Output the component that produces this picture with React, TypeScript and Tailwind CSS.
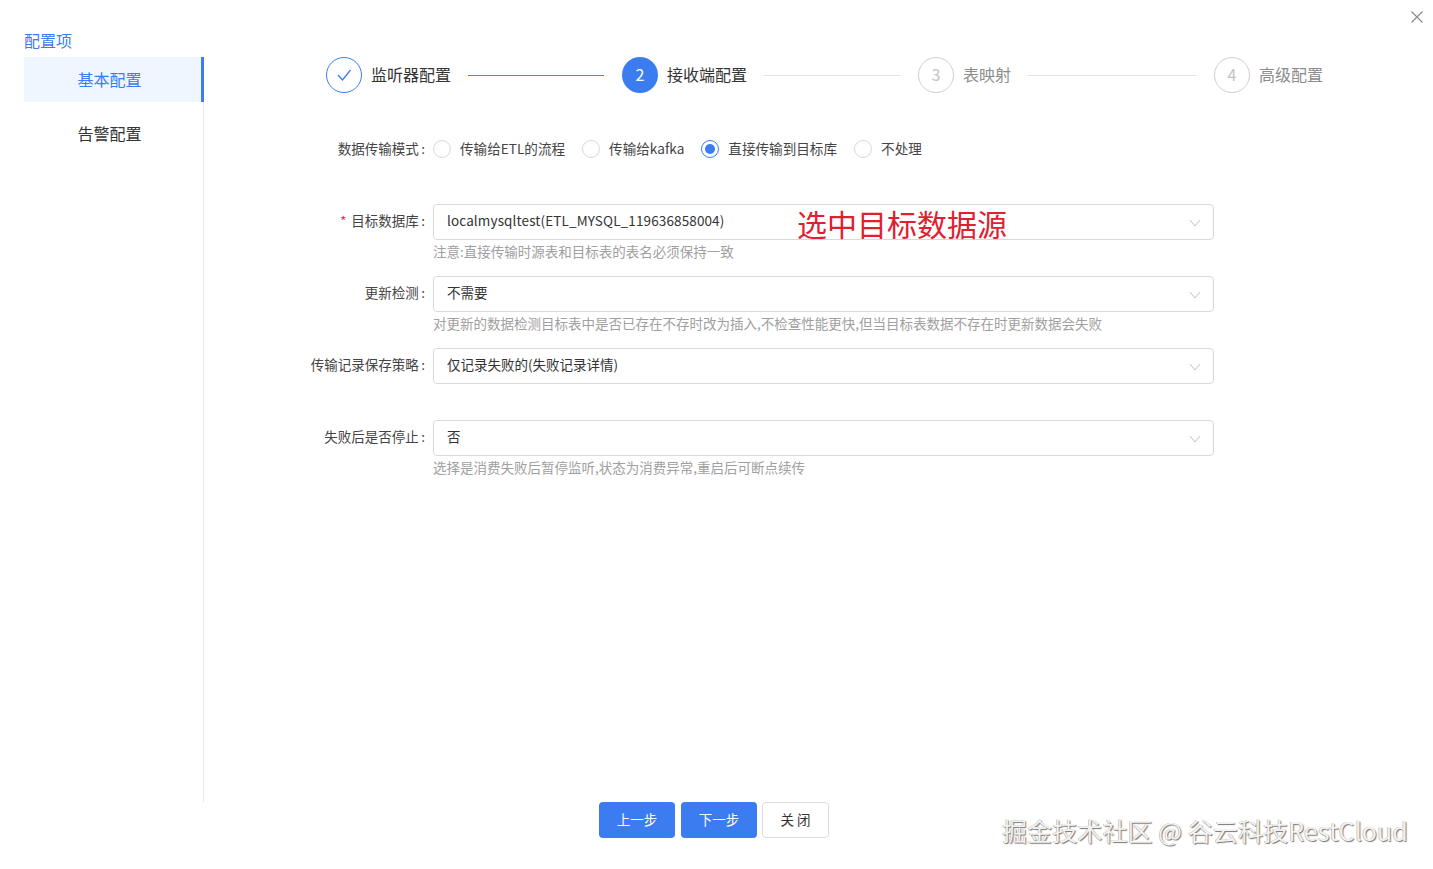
const FONT = "font-['Noto_Sans_CJK_SC','Noto_Sans',sans-serif]";

function Chevron() {
  return (
    <svg className="mt-[2px] h-[8px] w-[12px] text-[#bfbfbf]" viewBox="0 0 12 8" fill="none" stroke="currentColor" strokeWidth={1}>
      <path d="M1 1l5 6 5-6" />
    </svg>
  );
}

function Step({ num, title, state, last }: { num: string; title: string; state: "done" | "active" | "todo"; last?: boolean }) {
  return (
    <div className={last ? "flex items-center" : "flex w-[296px] items-center"}>
      {state === "done" && (
        <div className="flex h-[36px] w-[36px] shrink-0 items-center justify-center rounded-full border border-[#3b7cf0]">
          <svg className="h-[12px] w-[16px] text-[#3b7cf0]" viewBox="0 0 16 12" fill="none" stroke="currentColor" strokeWidth={1.3}>
            <path d="M2 6l4.5 5L14.5 1" />
          </svg>
        </div>
      )}
      {state === "active" && (
        <div className="flex h-[36px] w-[36px] shrink-0 items-center justify-center rounded-full bg-[#3b7cf0] pb-[2px] text-[16px] text-white">{num}</div>
      )}
      {state === "todo" && (
        <div className="flex h-[36px] w-[36px] shrink-0 items-center justify-center rounded-full border border-[#d0d0d0] pb-[2px] text-[16px] text-[#c4c4c4]">{num}</div>
      )}
      <span className={state === "todo" ? "ml-[9px] pb-[2px] text-[16px] text-[#8c8c8c]" : "ml-[9px] pb-[2px] text-[16px] text-[#333]"}>{title}</span>
      {!last && (
        <div className={state === "done" ? "ml-[17px] mr-[18px] h-px flex-1 bg-[#4a8cd0]" : "ml-[17px] mr-[18px] h-px flex-1 bg-[#e3e3e3]"} />
      )}
    </div>
  );
}

function Radio({ label, checked }: { label: string; checked?: boolean }) {
  return (
    <div className="mr-[17px] flex items-center">
      {checked ? (
        <div className="flex h-[18px] w-[18px] items-center justify-center rounded-full border border-[#3b7cf0]">
          <div className="h-[10px] w-[10px] rounded-full bg-[#3b7cf0]" />
        </div>
      ) : (
        <div className="h-[18px] w-[18px] rounded-full border border-[#d9d9d9]" />
      )}
      <span className="ml-[9px] pb-[2px] text-[13.6px] text-[#444]">{label}</span>
    </div>
  );
}

function FieldLabel({ label, required }: { label: string; required?: boolean }) {
  return (
    <div className="flex w-[229px] shrink-0 items-center justify-end pb-[3px] pr-[8px] text-[13.5px] text-[#444]">
      {required && <span className="mr-[5px] text-[13px] text-[#e5343f]">*</span>}
      <span>{label}</span>
      <span className="ml-[2.5px]">:</span>
    </div>
  );
}

function SelectRow({ label, value, hint, required, latin }: { label: string; value: string; hint?: string; required?: boolean; latin?: boolean }) {
  return (
    <div className="flex h-[72px] items-start">
      <div className="flex h-[36px] shrink-0">
        <FieldLabel label={label} required={required} />
      </div>
      <div className="w-[781px]">
        <div className="flex h-[36px] items-center justify-between rounded-[4px] border border-[#d9d9d9] bg-white pl-[13px] pr-[12px]">
          <span className={latin ? "pb-[3px] text-[13.5px] tracking-[0.13px] text-[#333]" : "pb-[3px] text-[13.5px] text-[#333]"}>{value}</span>
          <Chevron />
        </div>
        {hint && <div className="mt-[1px] text-[13.5px] leading-[20px] text-[#a0a0a0]">{hint}</div>}
      </div>
    </div>
  );
}

export default function App() {
  return (
    <div className={`relative flex h-[869px] w-full flex-col overflow-hidden bg-white ${FONT}`}>
      {/* close */}
      <svg className="absolute left-[1411px] top-[11px] h-[12px] w-[12px] text-[#888]" viewBox="0 0 12 12" fill="none" stroke="currentColor" strokeWidth={1.1}>
        <path d="M.5.5l11 11M11.5.5l-11 11" />
      </svg>

      <div className="flex h-[802px]">
        {/* sidebar */}
        <div className="ml-[24px] flex w-[180px] shrink-0 flex-col">
          <div className="mt-[29px] h-[28px] text-[16px] leading-[23px] text-[#3b7cf0]">配置项</div>
          <div className="flex-1 border-r border-[#e8e8e8]">
            <div className="-mr-px flex h-[45px] items-center justify-center border-r-[3px] border-[#3b7cf0] bg-[#f0f6ff] pb-[2px] pr-[6px] text-[16px] text-[#3b7cf0]">基本配置</div>
            <div className="mt-[9px] flex h-[45px] items-center justify-center pb-[2px] pr-[8px] text-[16px] text-[#333]">告警配置</div>
          </div>
        </div>

        {/* main */}
        <div className="flex-1 pt-[57px]">
          <div className="ml-[122px] flex">
            <Step num="1" title="监听器配置" state="done" />
            <Step num="2" title="接收端配置" state="active" />
            <Step num="3" title="表映射" state="todo" />
            <Step num="4" title="高级配置" state="todo" last />
          </div>

          <div className="mt-[42px] flex h-[28px] items-stretch">
            <div className="flex pt-[2px]">
              <FieldLabel label="数据传输模式" />
            </div>
            <div className="flex items-center">
              <Radio label="传输给ETL的流程" />
              <Radio label="传输给kafka" />
              <Radio label="直接传输到目标库" checked />
              <Radio label="不处理" />
            </div>
          </div>

          <div className="mt-[41px]">
            <SelectRow label="目标数据库" value="localmysqltest(ETL_MYSQL_119636858004)" hint="注意:直接传输时源表和目标表的表名必须保持一致" required latin />
            <SelectRow label="更新检测" value="不需要" hint="对更新的数据检测目标表中是否已存在不存时改为插入,不检查性能更快,但当目标表数据不存在时更新数据会失败" />
            <SelectRow label="传输记录保存策略" value="仅记录失败的(失败记录详情)" />
            <SelectRow label="失败后是否停止" value="否" hint="选择是消费失败后暂停监听,状态为消费异常,重启后可断点续传" />
          </div>
        </div>
      </div>

      {/* footer buttons */}
      <div className="ml-[599px] flex">
        <button className="h-[36px] w-[76px] rounded-[4px] bg-[#3b7cf0] pb-[2px] text-[13.5px] text-white">上一步</button>
        <button className="ml-[6px] h-[36px] w-[76px] rounded-[4px] bg-[#3b7cf0] pb-[2px] text-[13.5px] text-white">下一步</button>
        <button className="ml-[5px] h-[36px] w-[67px] rounded-[4px] border border-[#dcdcdc] bg-white pb-[2px] text-[13.5px] text-[#333]">关 闭</button>
      </div>

      {/* annotation over the first select */}
      <div className="absolute left-[797px] top-[201px] text-[30px] leading-[44px] text-[#e0202e]">选中目标数据源</div>

      {/* watermark */}
      <div className="absolute left-[1002px] top-[812px] whitespace-nowrap text-[25px] leading-[37px] tracking-[0.1px] text-[#f2f2f2] [text-shadow:1px_1px_1px_#777,-0.5px_0_0.5px_#aaa]">掘金技术社区 @ 谷云科技RestCloud</div>
    </div>
  );
}
